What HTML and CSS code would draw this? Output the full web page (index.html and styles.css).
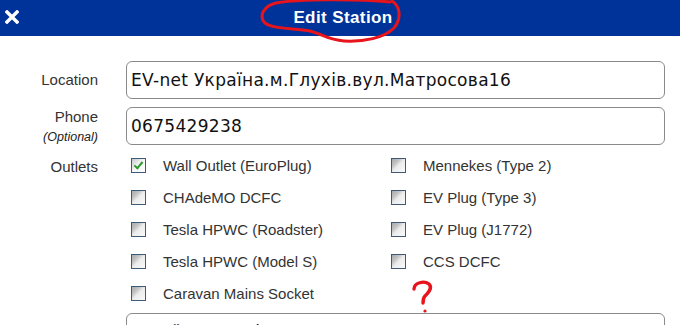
FILE: index.html
```html
<!doctype html>
<html lang="en">
<head>
    <meta name="viewport" content="width=device-width, initial-scale=1.0">
    <meta charset="UTF-8">
    <title>Edit Station</title>
    <link rel="stylesheet" href="styles.css">
</head>
<body>
<div class="header">
    <span class="close-btn">
        <svg width="14" height="14" viewBox="0 0 14 14"><path d="M2 2 L12 12 M12 2 L2 12" stroke="#fff" stroke-width="3.4" stroke-linecap="square"/></svg>
    </span>
    <h1>Edit Station</h1>
    <svg class="scribble" width="150" height="46" viewBox="0 0 150 46">
        <path d="M132 2 C100 -1 40 -1 18 3 C6 6 1 15 6 22 C12 29 34 28 52 31 C64 34 70 40 86 41 C106 42 126 38 136 28 C144 18 142 6 134 1" fill="none" stroke="#e8141c" stroke-width="3" stroke-linecap="round"/>
    </svg>
</div>
<div class="form">
    <div class="row">
        <label class="field-label">Location</label>
        <div class="text-input">EV-net Україна.м.Глухів.вул.Матросова16</div>
    </div>
    <div class="row">
        <label class="field-label phone-label">Phone<small>(Optional)</small></label>
        <div class="text-input">0675429238</div>
    </div>
    <div class="row outlets-row">
        <label class="field-label">Outlets</label>
        <div class="outlets">
            <div class="outlet"><span class="check checked"></span>Wall Outlet (EuroPlug)</div>
            <div class="outlet"><span class="check"></span>Mennekes (Type 2)</div>
            <div class="outlet"><span class="check"></span>CHAdeMO DCFC</div>
            <div class="outlet"><span class="check"></span>EV Plug (Type 3)</div>
            <div class="outlet"><span class="check"></span>Tesla HPWC (Roadster)</div>
            <div class="outlet"><span class="check"></span>EV Plug (J1772)</div>
            <div class="outlet"><span class="check"></span>Tesla HPWC (Model S)</div>
            <div class="outlet"><span class="check"></span>CCS DCFC</div>
            <div class="outlet"><span class="check"></span>Caravan Mains Socket</div>
        </div>
    </div>
    <div class="row">
        <label class="field-label">Address</label>
        <div class="text-input">Україна, Глухів, вул. Матросова 16</div>
    </div>
    <svg class="question" width="26" height="34" viewBox="0 0 26 34">
        <path d="M5 9 C5 3 15 0 20 4 C24 8 19 13 16 16 C14 18 14 20 14 23" fill="none" stroke="#e8141c" stroke-width="3.4" stroke-linecap="round"/>
        <circle cx="16" cy="31" r="1.6" fill="#e8141c"/>
    </svg>
</div>
</body>
</html>
```

FILE: styles.css
```css
body {
    margin: 0;
    font-family: "Liberation Sans", Arial, sans-serif;
    background-color: #fff;
    color: #333;
    overflow: hidden;
}

.header {
    position: relative;
    display: flex;
    align-items: center;
    justify-content: center;
    height: 36px;
    background-color: #003399;
}

.header h1 {
    margin: 0 0 0 6px;
    font-size: 17px;
    font-weight: bold;
    color: #fff;
    letter-spacing: 0.4px;
}

.close-btn {
    position: absolute;
    left: 5px;
    top: 10px;
    display: flex;
}

.scribble {
    position: absolute;
    left: 258px;
    top: 0;
    z-index: 1;
}

.form {
    position: relative;
    display: flex;
    flex-direction: column;
    gap: 8px;
    padding: 25px 15px 0 0;
}

.row {
    display: grid;
    grid-template-columns: 98px 1fr;
    column-gap: 28px;
    align-items: center;
}

.field-label {
    display: flex;
    flex-direction: column;
    align-items: flex-end;
    font-size: 15px;
    line-height: 18px;
    color: #333;
}

.phone-label {
    padding-top: 3px;
    margin: -2px 0;
}

.field-label small {
    margin-top: 1px;
    font-size: 12.5px;
    font-style: italic;
    line-height: 20px;
    color: #222;
}

.text-input {
    height: 36px;
    border: 1px solid #8a8a8a;
    border-radius: 6px;
    padding: 0 4px;
    font-family: "DejaVu Sans", Verdana, sans-serif;
    font-size: 17px;
    line-height: 36px;
    color: #111;
    letter-spacing: 0.3px;
    white-space: nowrap;
    overflow: hidden;
}

.outlets-row {
    align-items: start;
    margin-top: 1px;
    margin-bottom: 1px;
}

.outlets-row .field-label {
    line-height: 22px;
    margin-top: 2px;
}

.outlets {
    display: grid;
    grid-template-columns: 260px 1fr;
    row-gap: 10px;
    padding-left: 5px;
}

.outlet {
    display: flex;
    align-items: center;
    gap: 17px;
    height: 22px;
    font-size: 15px;
    color: #333;
}

.check {
    width: 13px;
    height: 13px;
    border: 1px solid #3d5a78;
    background: linear-gradient(135deg, #a8a8a8 0%, #c4c4c4 30%, #ececec 50%, #fafafa 100%);
    flex-shrink: 0;
}

.check.checked {
    position: relative;
    background: linear-gradient(135deg, #c8c8c8 0%, #e4e4e4 30%, #f6f6f6 50%, #fff 100%);
}

.check.checked::after {
    content: "";
    position: absolute;
    left: 4px;
    top: 1px;
    width: 3px;
    height: 7px;
    border: solid #2f9a2f;
    border-width: 0 2.5px 2.5px 0;
    transform: rotate(40deg);
}

.question {
    position: absolute;
    left: 409px;
    top: 244px;
}
```
